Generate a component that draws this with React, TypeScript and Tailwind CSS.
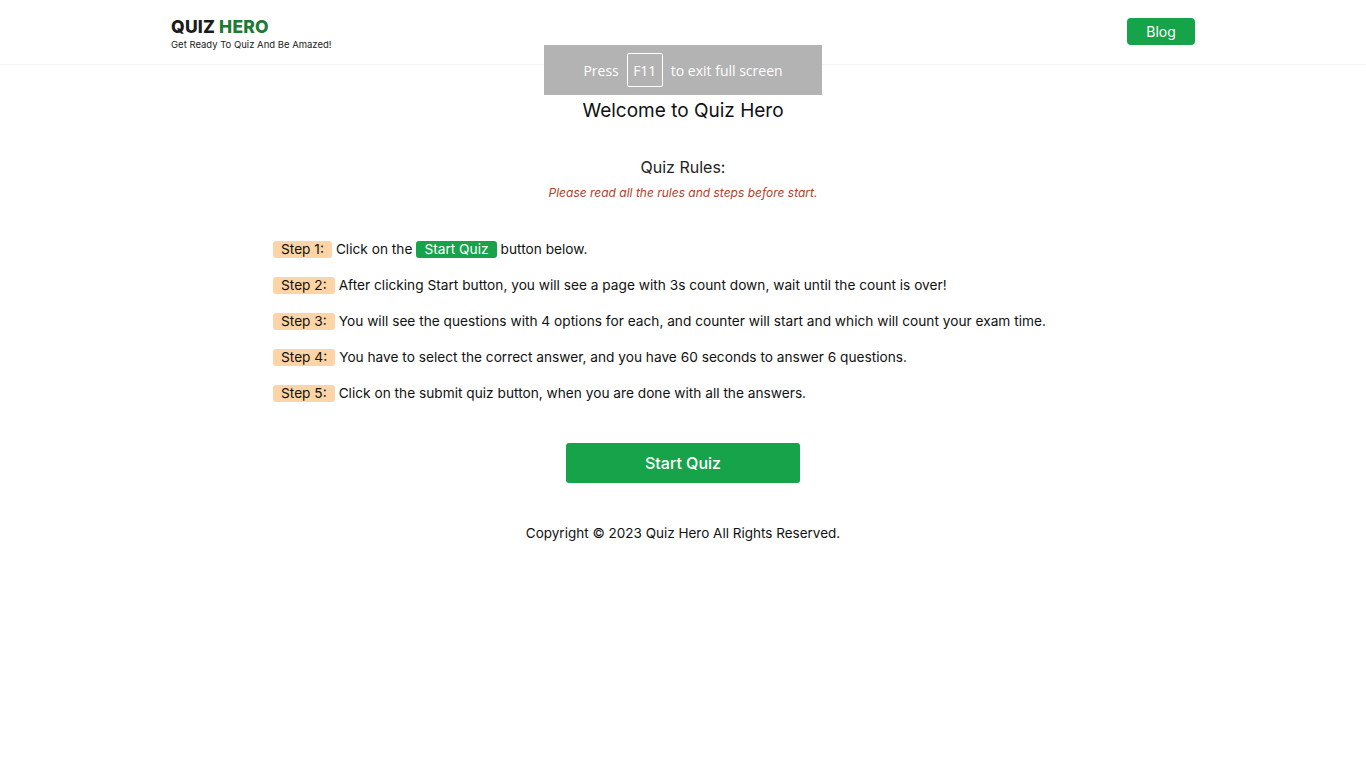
import React from "react";

const steps = [
  null,
  "After clicking Start button, you will see a page with 3s count down, wait until the count is over!",
  "You will see the questions with 4 options for each, and counter will start and which will count your exam time.",
  "You have to select the correct answer, and you have 60 seconds to answer 6 questions.",
  "Click on the submit quiz button, when you are done with all the answers.",
];

export default function App() {
  return (
    <div className="relative min-h-screen bg-white text-[#111] font-['Inter','Noto_Sans',sans-serif]">
      {/* Header */}
      <header className="h-[65px] border-b border-gray-100">
        <div className="max-w-5xl mx-auto h-full flex items-center justify-between">
          <div className="pt-[4px]">
            <div className="text-[17.5px] font-extrabold leading-[20px] tracking-[0.2px] text-[#1c1c1c]">
              QUIZ <span className="text-[#1f7a35]">HERO</span>
            </div>
            <div className="text-[9.5px] leading-[14px] mt-[1px] text-[#222]">Get Ready To Quiz And Be Amazed!</div>
          </div>
          <button className="bg-[#16a34a] text-white text-[14px] w-[68px] h-[27px] rounded-[4px] mb-[2px]">Blog</button>
        </div>
      </header>

      {/* Main */}
      <main className="flex flex-col items-center">
        <h1 className="mt-[33px] text-[19px] leading-[26px]">Welcome to Quiz Hero</h1>
        <h2 className="mt-[33px] text-[16px] leading-[20px] text-[#222]">Quiz Rules:</h2>
        <p className="mt-[7px] text-[12px] italic text-[#b0412a]">Please read all the rules and steps before start.</p>

        <div className="w-[820px] mt-[39px] flex flex-col gap-[19px] text-[13.7px]">
          {steps.map((text, i) => (
            <div key={i} className="flex items-center h-[17px]">
              <span className="bg-[#fdd4a5] rounded-[3px] px-[8px] h-[17px] leading-[17px] mr-[4px]">Step {i + 1}:</span>
              {i === 0 ? (
                <span className="flex items-center">
                  Click on the
                  <span className="bg-[#16a34a] text-white rounded-[3px] px-[8px] h-[17px] leading-[17px] mx-[4px]">Start Quiz</span>
                  button below.
                </span>
              ) : (
                <span>{text}</span>
              )}
            </div>
          ))}
        </div>

        <button className="mt-[41px] w-[234px] h-[40px] rounded-[3px] bg-[#16a34a] text-white text-[16px] font-medium">
          Start Quiz
        </button>

        <p className="mt-[40px] text-[13.5px]">Copyright © 2023 Quiz Hero All Rights Reserved.</p>
      </main>

      {/* Browser fullscreen overlay */}
      <div className="absolute left-[544px] top-[45px] w-[278px] h-[50px] bg-[#b3b3b3] flex items-center justify-center gap-[8px] text-white text-[14px] font-['Open_Sans',sans-serif]">
        <span>Press</span>
        <span className="border border-white rounded-[2px] w-[36px] h-[34px] flex items-center justify-center">F11</span>
        <span>to exit full screen</span>
      </div>
    </div>
  );
}
